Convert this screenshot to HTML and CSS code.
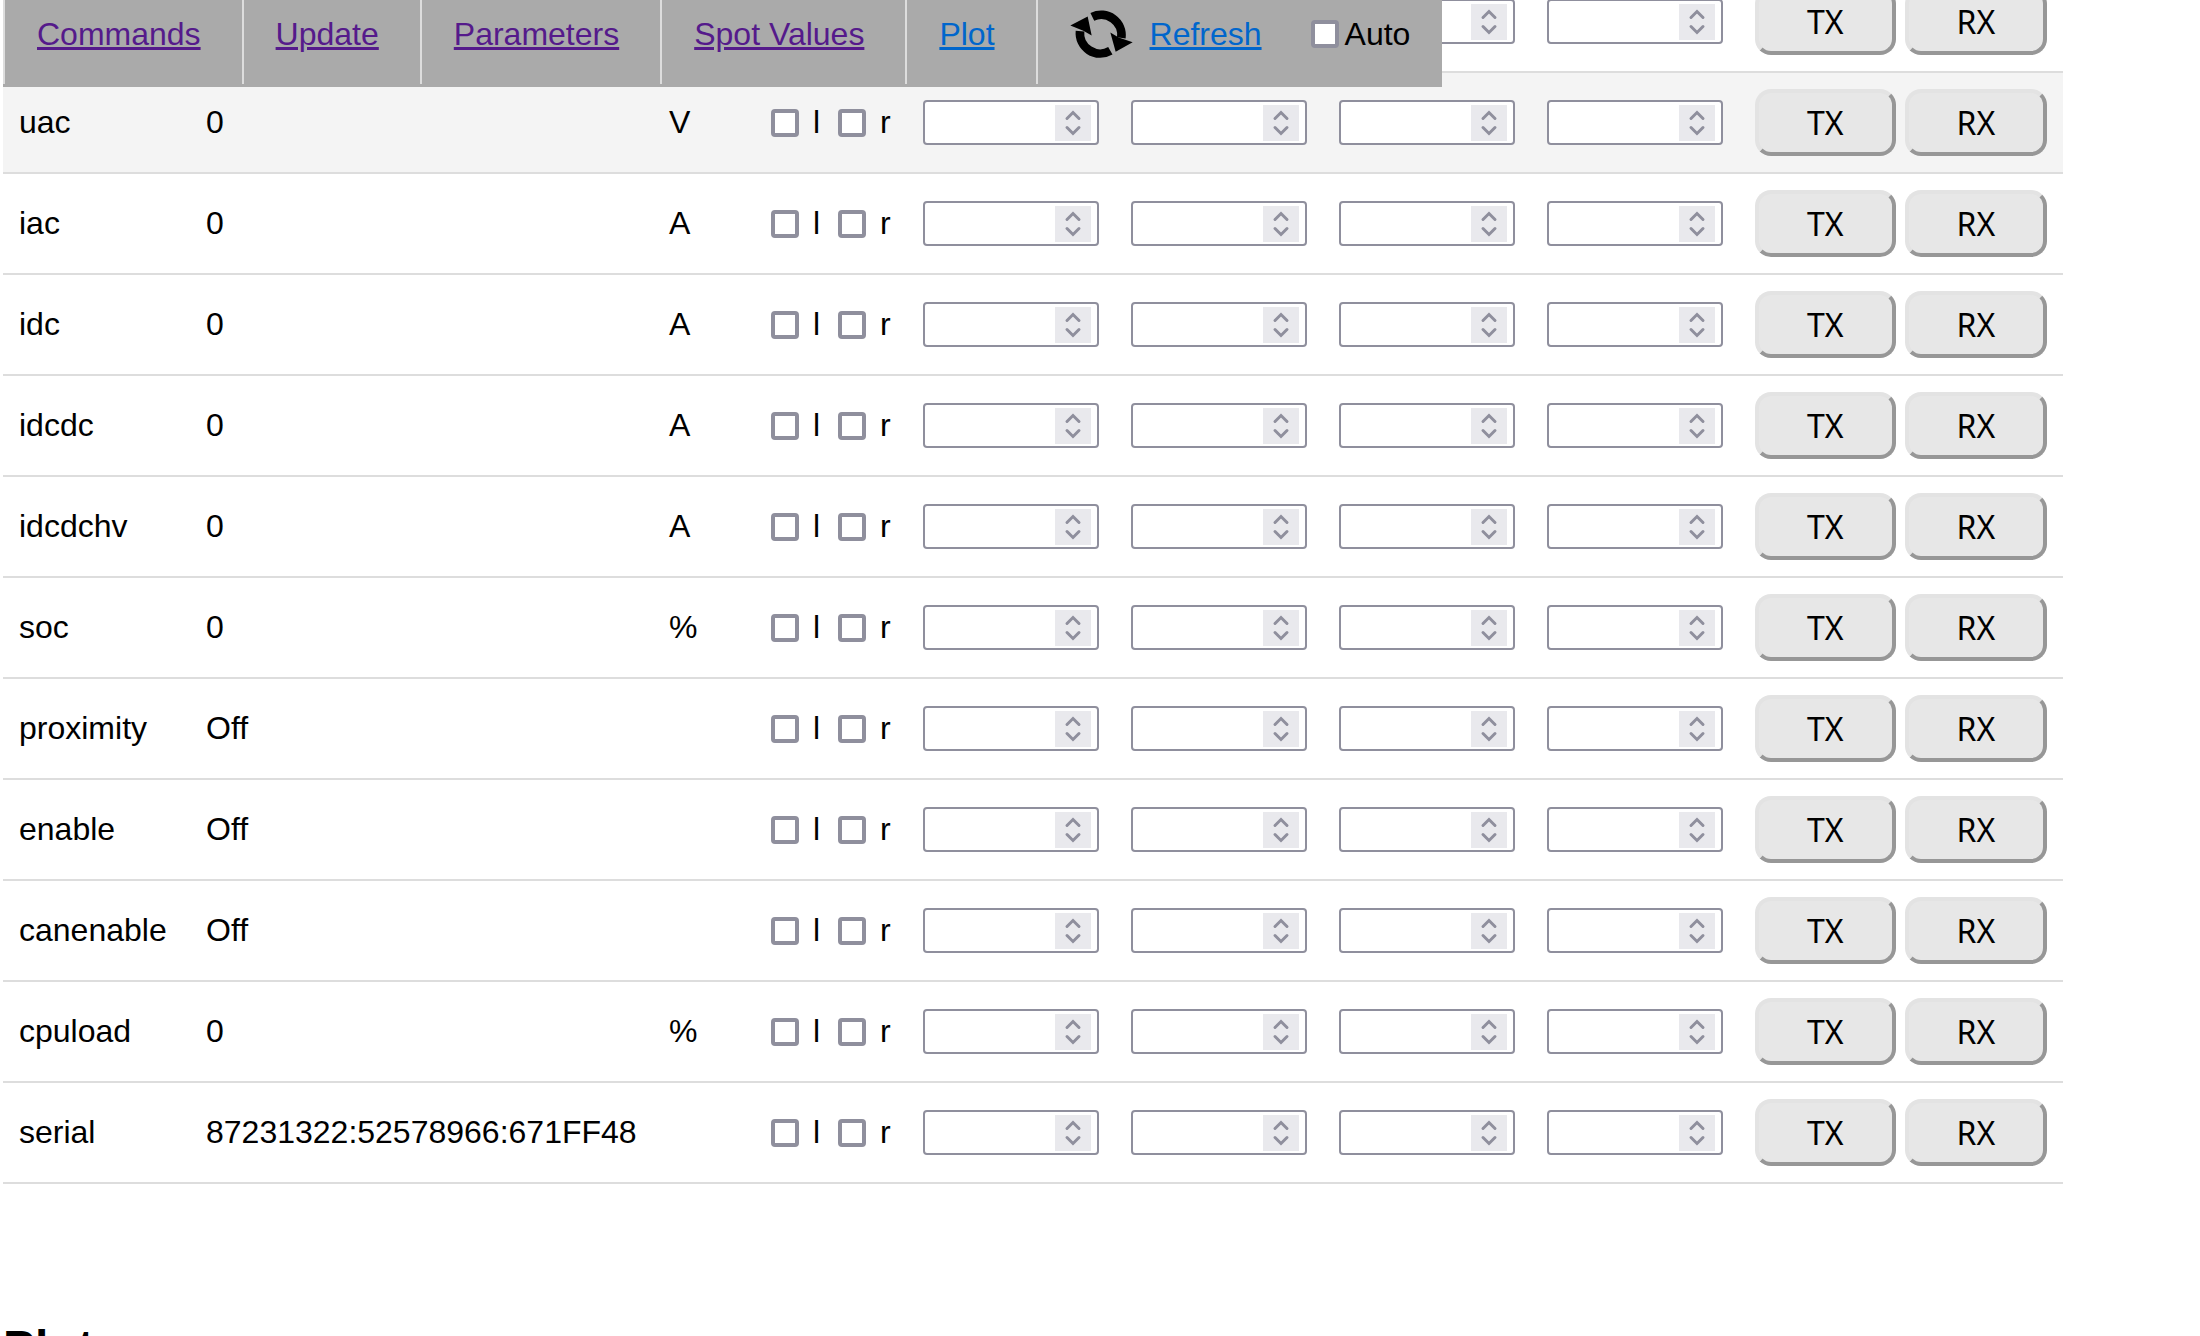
FILE: index.html
```
<!DOCTYPE html>
<html lang="en">

  <head>
    <meta charset="utf-8">
    <title>Spot Values</title>
    <link rel="stylesheet" href="styles.css">
  </head>
  <body>

    <svg class="symbols" aria-hidden="true">
      <symbol id="spin" viewBox="0 0 36 36">
        <path d="M12 13.5 L18 7.5 L24 13.5 M12 22.5 L18 28.5 L24 22.5" fill="none" stroke="#8f8f9d" stroke-width="3" stroke-linecap="round"/>
      </symbol>
    </svg>

    <nav class="navbar">
      <ul>
        <li><a class="visited" href="#commands">Commands</a></li>
        <li><a class="visited" href="#update">Update</a></li>
        <li><a class="visited" href="#parameters">Parameters</a></li>
        <li><a class="visited" href="#spotValues">Spot Values</a></li>
        <li><a href="#plot">Plot</a></li>
        <li class="refresh">
          <svg class="refresh-icon" viewBox="90 26 189 149" aria-hidden="true">
            <path d="M157 49 A61 61 0 0 1 244 112 M211 151 A61 61 0 0 1 120 92" fill="none" stroke="#000" stroke-width="26"/>
            <path d="M211 96 L236 111 L278 125 L227 154 Z M155 105 L130 91 L91 75 L143 48 Z"/>
          </svg>
          <a href="#spotValues">Refresh</a>
          <label><input type="checkbox" id="autoRefresh">Auto</label>
        </li>
      </ul>
    </nav>

    <main>
      <table id="spotValues">
        <colgroup>
          <col class="col-name">
          <col class="col-value">
          <col class="col-unit">
          <col class="col-axis">
        </colgroup>
        <tbody></tbody>
      </table>

      <h2 id="plot">Plot</h2>
    </main>

    <script src="script.js"></script>
  </body>

</html>
```
FILE: styles.css
```
body {
  margin: 0 3px;
  font-family: Arial, "Liberation Sans", sans-serif;
  font-size: 32px;
  color: #000;
  background-color: #fff;
}

.symbols {
  display: none;
}

/* menu bar stays above the table */
.navbar {
  position: fixed;
  top: 0;
  z-index: 1;
  padding-bottom: 3px;
  background-color: #aaa;
}

.navbar ul {
  display: flex;
  margin: 0;
  padding: 0;
  list-style: none;
}

.navbar li {
  display: flex;
  align-items: center;
  height: 52px;
  padding: 8px 41px 24px 32px;
  border-left: 2px solid #ddd;
}

.navbar .refresh {
  padding-right: 32px;
}

.navbar a {
  color: #0066cc;
}

.navbar a.visited {
  color: #551a8b;
}

.navbar label {
  display: flex;
  align-items: center;
  gap: 6px;
  margin-left: 49px;
}

.refresh-icon {
  width: 63px;
  height: 50px;
  margin-right: 17px;
}

input[type="checkbox"] {
  appearance: none;
  width: 28px;
  height: 28px;
  margin: 0;
  border: 4px solid #8f8f9d;
  border-radius: 4px;
  background-color: #fff;
}

main {
  height: 100vh;
  overflow-y: auto;
  scrollbar-width: none;
}

/* the first row is tucked under the menu bar */
table {
  margin-top: -28px;
  border-collapse: separate;
  border-spacing: 0;
}

.col-name {
  width: 187px;
}

.col-value {
  width: 463px;
}

.col-unit {
  width: 96px;
}

.col-axis {
  width: 158px;
}

td {
  box-sizing: border-box;
  padding: 16px;
  border-bottom: 2px solid #ddd;
  vertical-align: middle;
  white-space: nowrap;
}

tr.active td {
  background-color: #f4f4f4;
}

.axis {
  display: flex;
  gap: 18px;
  padding-left: 6px;
}

.axis label {
  display: flex;
  align-items: center;
  gap: 14px;
}

.number {
  display: flex;
  align-items: center;
  box-sizing: border-box;
  width: 176px;
  height: 45px;
  padding-right: 6px;
  border: 2px solid #8f8f9d;
  border-radius: 4px;
  background-color: #fff;
}

.number input {
  appearance: textfield;
  flex: 1;
  min-width: 0;
  padding: 0 4px;
  border: none;
  outline: none;
  background: none;
  font-size: 27px;
}

.number input::-webkit-inner-spin-button {
  display: none;
}

.number svg {
  width: 36px;
  height: 36px;
  background-color: #e9e9ed;
}

.buttons {
  display: flex;
  gap: 9px;
}

button {
  height: 67px;
  padding: 0 48px;
  border: 4px solid;
  border-color: #e3e3e3 #979797 #979797 #e3e3e3;
  border-radius: 16px;
  background-color: #e7e7e7;
  color: #000;
  font-family: "Noto Sans", sans-serif;
  font-size: 32px;
  cursor: pointer;
}

h2 {
  margin: 136px 0 40px;
  font-size: 48px;
}
```
FILE: script.js
```
var spotValues = [
  { name: "", value: "", unit: "" },
  { name: "uac", value: "0", unit: "V", active: true },
  { name: "iac", value: "0", unit: "A" },
  { name: "idc", value: "0", unit: "A" },
  { name: "idcdc", value: "0", unit: "A" },
  { name: "idcdchv", value: "0", unit: "A" },
  { name: "soc", value: "0", unit: "%" },
  { name: "proximity", value: "Off", unit: "" },
  { name: "enable", value: "Off", unit: "" },
  { name: "canenable", value: "Off", unit: "" },
  { name: "cpuload", value: "0", unit: "%" },
  { name: "serial", value: "87231322:52578966:671FF48", unit: "" }
];

var canFields = ["CAN id", "position", "bits", "gain"];

function buildRow(item) {
  var html = "<tr" + (item.active ? " class=\"active\"" : "") + ">";
  html += "<td>" + item.name + "</td>";
  html += "<td>" + item.value + "</td>";
  html += "<td>" + item.unit + "</td>";

  // left / right plot axis
  html += "<td><div class=\"axis\">";
  html += "<label><input type=\"checkbox\">l</label>";
  html += "<label><input type=\"checkbox\">r</label>";
  html += "</div></td>";

  for (var i = 0; i < canFields.length; i++) {
    html += "<td><div class=\"number\"><input type=\"number\" aria-label=\"" + canFields[i] + "\">";
    html += "<svg><use href=\"#spin\"></use></svg></div></td>";
  }

  html += "<td><div class=\"buttons\"><button type=\"button\">TX</button><button type=\"button\">RX</button></div></td>";
  return html + "</tr>";
}

document.querySelector("#spotValues tbody").innerHTML = spotValues.map(buildRow).join("");
```
